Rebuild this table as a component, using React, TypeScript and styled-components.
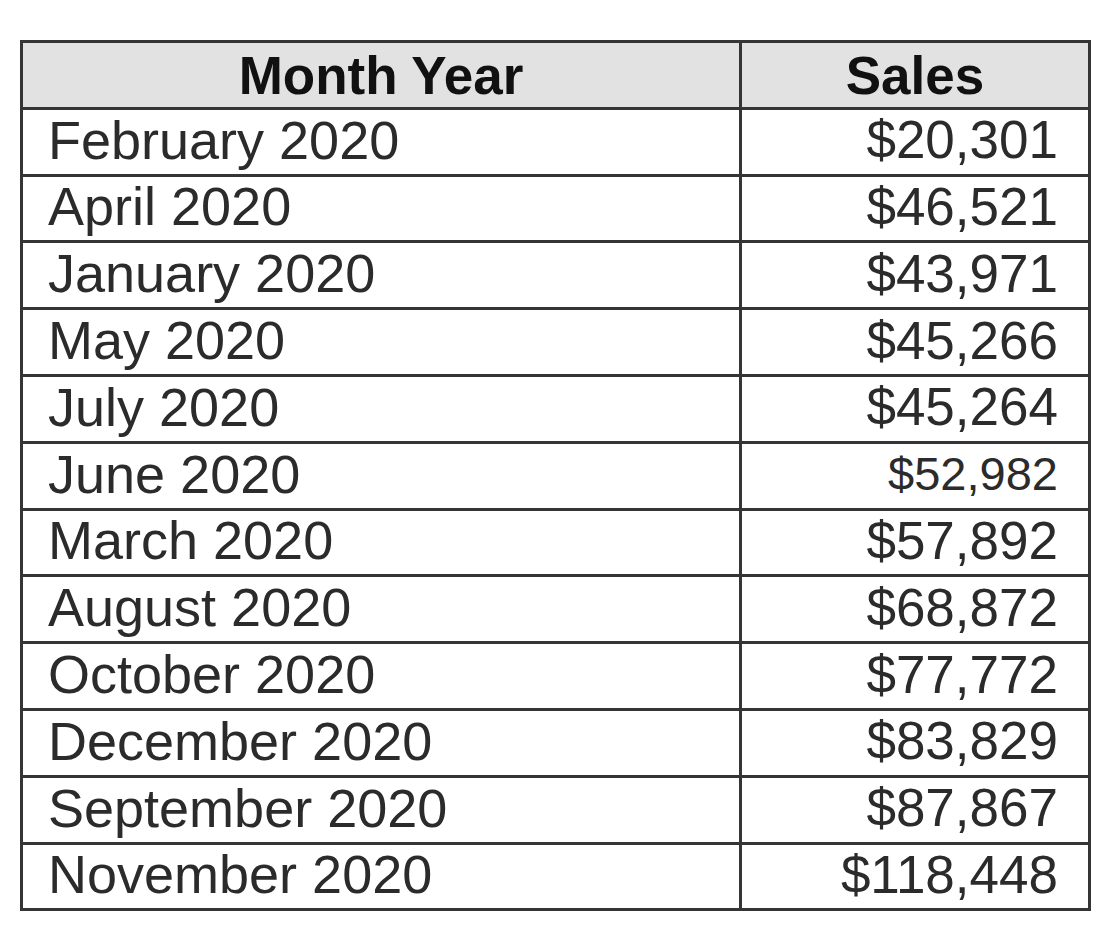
import React from "react";
import styled, { createGlobalStyle } from "styled-components";

const Global = createGlobalStyle`
  html, body { margin: 0; padding: 0; background: #ffffff; }
  body { font-family: "Liberation Sans", Arial, sans-serif; }
`;

const Page = styled.div`
  width: 1120px;
  height: 928px;
  padding: 40px 0 0 20px;
  box-sizing: border-box;
  background: #ffffff;
`;

const Grid = styled.div`
  display: grid;
  width: 1071px;
  grid-template-columns: 716px 346px;
  grid-auto-rows: 63.8px;
  gap: 3px;
  padding: 3px;
  box-sizing: border-box;
  background: #353535;
`;

const HeadCell = styled.div`
  background: #e2e2e2;
  display: flex;
  align-items: center;
  justify-content: center;
  font-weight: 700;
  font-size: 53px;
  color: #111111;
  padding-top: 2px;
`;

const Cell = styled.div<{ $align: "left" | "right"; $size?: number }>`
  background: #ffffff;
  display: flex;
  align-items: center;
  justify-content: ${(p) => (p.$align === "right" ? "flex-end" : "flex-start")};
  padding: ${(p) => (p.$align === "right" ? "0 30px 0 0" : "0 0 0 25px")};
  font-size: ${(p) => p.$size ?? 54}px;
  color: #2b2b2b;
  white-space: nowrap;
  line-height: 1;
  padding-bottom: 4px;
`;

const rows: { m: string; s: string; size?: number }[] = [
  { m: "February 2020", s: "$20,301" },
  { m: "April 2020", s: "$46,521" },
  { m: "January 2020", s: "$43,971" },
  { m: "May 2020", s: "$45,266" },
  { m: "July 2020", s: "$45,264" },
  { m: "June 2020", s: "$52,982", size: 47 },
  { m: "March 2020", s: "$57,892" },
  { m: "August 2020", s: "$68,872" },
  { m: "October 2020", s: "$77,772" },
  { m: "December 2020", s: "$83,829" },
  { m: "September 2020", s: "$87,867" },
  { m: "November 2020", s: "$118,448" },
];

export default function App() {
  return (
    <Page>
      <Global />
      <Grid>
        <HeadCell>Month Year</HeadCell>
        <HeadCell>Sales</HeadCell>
        {rows.map((r) => (
          <React.Fragment key={r.m}>
            <Cell $align="left">{r.m}</Cell>
            <Cell $align="right" $size={r.size ?? 53}>
              {r.s}
            </Cell>
          </React.Fragment>
        ))}
      </Grid>
    </Page>
  );
}
